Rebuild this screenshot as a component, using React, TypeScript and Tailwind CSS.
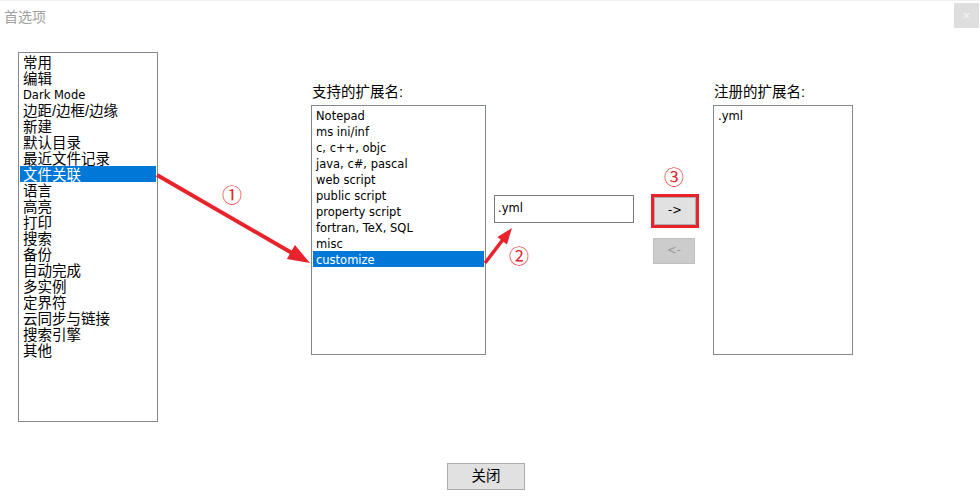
import React from 'react';

const categories = [
  '常用', '编辑', 'Dark Mode', '边距/边框/边缘', '新建', '默认目录', '最近文件记录', '文件关联',
  '语言', '高亮', '打印', '搜索', '备份', '自动完成', '多实例', '定界符', '云同步与链接', '搜索引擎', '其他',
];

const extensions = [
  'Notepad', 'ms ini/inf', 'c, c++, objc', 'java, c#, pascal', 'web script', 'public script',
  'property script', 'fortran, TeX, SQL', 'misc', 'customize',
];

const isLatin = (s: string) => /^[\x00-\x7f]+$/.test(s);

// latin text in the dialog is rendered with a Tahoma-like face
const latin = 'font-["DejaVu_Sans",sans-serif] text-[11.5px]';

const ListBox: React.FC<{ items: string[]; selected?: string; className: string }> = ({ items, selected, className }) => (
  <div className={`border border-[#828790] bg-white p-px ${className}`}>
    {items.map((item) => (
      <div
        key={item}
        className={`h-4 px-[3px] pt-px whitespace-nowrap leading-4 ${isLatin(item) ? latin : 'text-[14.5px]'} ${
          item === selected ? 'bg-[#0078d7] text-white' : 'text-black'
        }`}
      >
        {item}
      </div>
    ))}
  </div>
);

const Annotations: React.FC = () => (
  <div className="pointer-events-none absolute inset-0">
    <svg width="980" height="502" className="absolute inset-0">
      <line x1="157" y1="174" x2="292" y2="252" stroke="#e8232b" strokeWidth="4" />
      <polygon points="310,262 286.9,257.9 294.9,244.1" fill="#e8232b" />
      <line x1="485" y1="262" x2="503" y2="238.5" stroke="#e8232b" strokeWidth="3.5" />
      <polygon points="512,227 506.9,243.4 497.4,236" fill="#e8232b" />
    </svg>
    <span className="absolute left-[222px] top-[183px] text-[20px] leading-6 text-[#e8232b]">①</span>
    <span className="absolute left-[509px] top-[244px] text-[20px] leading-6 text-[#e8232b]">②</span>
    <span className="absolute left-[664px] top-[165px] text-[20px] leading-6 text-[#e8232b]">③</span>
  </div>
);

export default function App() {
  return (
    <div
      className="relative flex h-[502px] w-[980px] flex-col overflow-hidden border-t border-[#f0f0f0] bg-white"
      style={{ fontFamily: '"Liberation Sans", "Noto Sans CJK SC", sans-serif' }}
    >
      <div className="flex h-[30px] items-start justify-between">
        <span className="ml-[4px] mt-[6px] text-[14px] leading-5 text-[#a0a0a0]">首选项</span>
        <div className="mr-px mt-[2px] flex h-[25px] w-[25px] items-center justify-center bg-[#dedede] text-[13px] leading-none text-[#f6f6f6]">
          ×
        </div>
      </div>

      <div className="flex items-start">
        <ListBox items={categories} selected="文件关联" className="ml-[18px] mt-[21px] h-[370px] w-[140px]" />

        <div className="ml-[153px] mt-[51px] flex flex-col">
          <span className="ml-px h-[23px] text-[14.5px] leading-5 text-black">支持的扩展名:</span>
          <ListBox items={extensions} selected="customize" className="h-[250px] w-[175px]" />
        </div>

        <div className={`ml-[8px] mt-[164px] flex h-[28px] w-[140px] items-center border border-[#7a7a7a] px-[3px] text-black ${latin}`}>
          .yml
        </div>

        <div className="ml-[17px] mt-[163px] flex flex-col items-start">
          <div className="border-[3px] border-[#e8232b] bg-white">
            <div className={`flex h-[28px] w-[42px] items-center justify-center border border-[#adadad] bg-[#e1e1e1] text-black ${latin}`}>
              -&gt;
            </div>
          </div>
          <div className={`ml-[2px] mt-[10px] flex h-[26px] w-[42px] items-center justify-center border border-[#bfbfbf] bg-[#cccccc] text-[#9a9a9a] ${latin}`}>
            &lt;-
          </div>
        </div>

        <div className="ml-[14px] mt-[51px] flex flex-col">
          <span className="ml-px h-[23px] text-[14.5px] leading-5 text-black">注册的扩展名:</span>
          <ListBox items={['.yml']} className="h-[250px] w-[140px]" />
        </div>
      </div>

      <div className="mt-[41px] flex">
        <button className="ml-[447px] flex h-[27px] w-[78px] items-center justify-center border border-[#adadad] bg-[#e1e1e1] text-[14.5px] text-black">
          关闭
        </button>
      </div>

      <Annotations />
    </div>
  );
}
